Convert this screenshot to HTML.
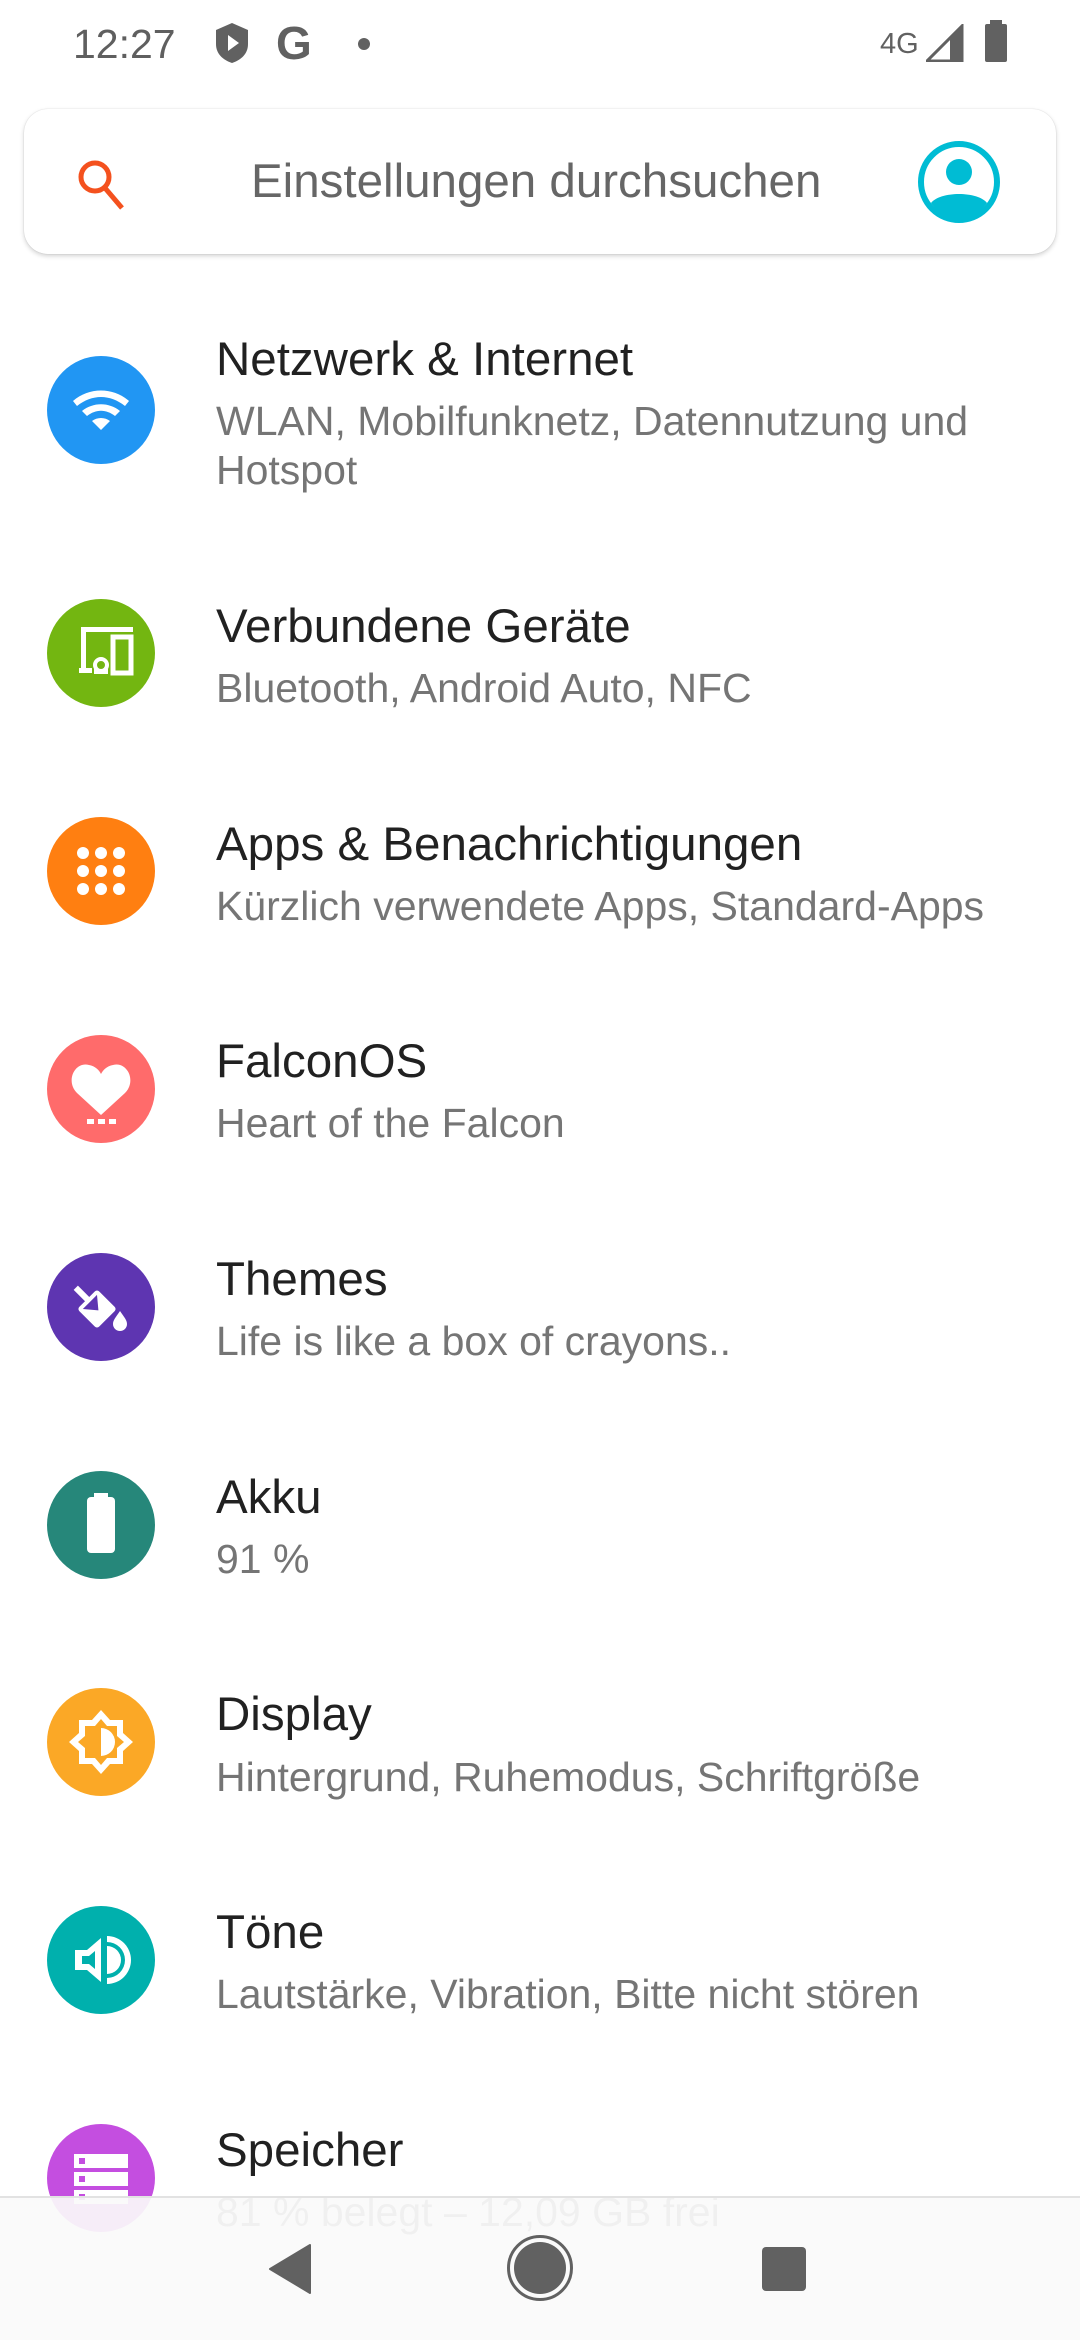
<!DOCTYPE html>
<html><head><meta charset="utf-8"><style>
*{margin:0;padding:0;box-sizing:border-box}
body{width:1080px;height:2340px;background:#fff;position:relative;overflow:hidden;font-family:"Liberation Sans",Roboto,sans-serif}
.a{position:absolute;white-space:nowrap}
.t{left:216px;font-size:47.5px;color:#212121;height:60px;line-height:60px}
.s{left:216px;font-size:41px;color:#757575;height:50px;line-height:50px}
.ic{position:absolute;left:47px;width:108px;height:108px}
</style></head><body>
<!-- status bar -->
<div class="a" style="left:73px;top:21px;font-size:41px;color:#5f5f5f;line-height:46px">12:27</div>
<svg class="a" style="left:214px;top:22px" width="36" height="42" viewBox="0 0 36 42"><path d="M18 1 L34 8 V22 C34 32 27 38 18 41 C9 38 2 32 2 22 V8 Z" fill="#616161"/><path d="M14 13 L25 21 L14 29 Z" fill="#fff"/></svg>
<div class="a" style="left:276px;top:18px;font-size:46px;font-weight:bold;color:#616161;line-height:50px">G</div>
<div class="a" style="left:358px;top:38px;width:12px;height:12px;border-radius:50%;background:#616161"></div>
<div class="a" style="left:880px;top:26px;font-size:29px;color:#616161;line-height:36px">4G</div>
<svg class="a" style="left:926px;top:24px" width="38" height="38" viewBox="0 0 38 38"><path d="M36 2 V37 H1 Z" fill="none" stroke="#616161" stroke-width="3"/><path d="M36 2 V37 H24 V14 Z" fill="#616161"/></svg>
<div class="a" style="left:985px;top:24px;width:22px;height:38px;background:#616161;border-radius:2px"></div>
<div class="a" style="left:990px;top:20px;width:12px;height:6px;background:#616161"></div>
<!-- search -->
<div class="a" style="left:24px;top:109px;width:1032px;height:145px;border-radius:24px;background:#fff;box-shadow:0 2px 5px rgba(0,0,0,0.18),0 0 1px rgba(0,0,0,0.2)"></div>
<svg class="a" style="left:74px;top:156px" width="54" height="56" viewBox="0 0 54 56"><circle cx="21" cy="21" r="14" fill="none" stroke="#F4511E" stroke-width="5"/><path d="M31 32 L48 52" stroke="#F4511E" stroke-width="5"/></svg>
<div class="a" style="left:251px;top:154px;font-size:47.5px;color:#666;line-height:56px">Einstellungen durchsuchen</div>
<svg class="a" style="left:918px;top:141px" width="82" height="82" viewBox="0 0 82 82"><circle cx="41" cy="41" r="38" fill="none" stroke="#00BCD4" stroke-width="6"/><circle cx="41" cy="31" r="13" fill="#00BCD4"/><path d="M13 62 C22 50 60 50 69 62 C62 72 52 78 41 78 C30 78 20 72 13 62Z" fill="#00BCD4"/></svg>

<!-- rows -->
<svg class="ic" style="top:356px" viewBox="0 0 108 108"><circle cx="54" cy="54" r="54" fill="#2196F3"/><path d="M26 45 C42 31 66 31 82 45 L78 50 C63 38 45 38 30 50Z M35 55 C46 46 62 46 73 55 L68 60 C59 53 49 53 40 60Z M45 65 C50 61 58 61 63 65 L54 74Z" fill="#fff"/></svg>
<div class="a t" style="top:330px">Netzwerk &amp; Internet</div>
<div class="a s" style="top:396px">WLAN, Mobilfunknetz, Datennutzung und</div>
<div class="a s" style="top:445px">Hotspot</div>

<svg class="ic" style="top:599px" viewBox="0 0 108 108"><circle cx="54" cy="54" r="54" fill="#73B611"/><path d="M34 28 H86 V33 H39 V73 H34Z M32 69 H45 V74 H32Z" fill="#fff"/><rect x="66" y="38" width="18" height="36" fill="none" stroke="#fff" stroke-width="5"/><circle cx="54" cy="66" r="6" fill="none" stroke="#fff" stroke-width="4"/><rect x="47" y="70" width="14" height="5" fill="#fff"/></svg>
<div class="a t" style="top:597px">Verbundene Geräte</div>
<div class="a s" style="top:663px">Bluetooth, Android Auto, NFC</div>

<svg class="ic" style="top:817px" viewBox="0 0 108 108"><circle cx="54" cy="54" r="54" fill="#FF7F11"/><g fill="#fff"><circle cx="36" cy="36" r="6"/><circle cx="54" cy="36" r="6"/><circle cx="72" cy="36" r="6"/><circle cx="36" cy="54" r="6"/><circle cx="54" cy="54" r="6"/><circle cx="72" cy="54" r="6"/><circle cx="36" cy="72" r="6"/><circle cx="54" cy="72" r="6"/><circle cx="72" cy="72" r="6"/></g></svg>
<div class="a t" style="top:815px">Apps &amp; Benachrichtigungen</div>
<div class="a s" style="top:881px">Kürzlich verwendete Apps, Standard-Apps</div>

<svg class="ic" style="top:1035px" viewBox="0 0 108 108"><circle cx="54" cy="54" r="54" fill="#FF6B6B"/><path d="M54 80 L30 58 C18 46 28 26 42 30 C48 31 52 35 54 39 C56 35 60 31 66 30 C80 26 90 46 78 58Z" fill="#fff"/><g fill="#fff"><rect x="40" y="84" width="7" height="5"/><rect x="51" y="84" width="7" height="5"/><rect x="62" y="84" width="7" height="5"/></g></svg>
<div class="a t" style="top:1032px">FalconOS</div>
<div class="a s" style="top:1098px">Heart of the Falcon</div>

<svg class="ic" style="top:1253px" viewBox="0 0 108 108"><circle cx="54" cy="54" r="54" fill="#5E35B1"/><g transform="rotate(-45 50 56)"><rect x="36" y="42" width="28" height="28" rx="3" fill="#fff"/><path d="M40 46 H60 L50 58Z" fill="#5E35B1"/><rect x="47" y="26" width="6" height="18" fill="#fff"/></g><path d="M73 58 C69 64 66 67 66 71 A7 7 0 0 0 80 71 C80 67 77 64 73 58Z" fill="#fff"/></svg>
<div class="a t" style="top:1250px">Themes</div>
<div class="a s" style="top:1316px">Life is like a box of crayons..</div>

<svg class="ic" style="top:1471px" viewBox="0 0 108 108"><circle cx="54" cy="54" r="54" fill="#26877A"/><rect x="47" y="22" width="14" height="6" fill="#fff"/><rect x="40" y="26" width="28" height="56" rx="4" fill="#fff"/></svg>
<div class="a t" style="top:1468px">Akku</div>
<div class="a s" style="top:1534px">91 %</div>

<svg class="ic" style="top:1688px" viewBox="0 0 108 108"><circle cx="54" cy="54" r="54" fill="#FBA826"/><path d="M54 22 L63 32 H76 V45 L86 54 L76 63 V76 H63 L54 86 L45 76 H32 V63 L22 54 L32 45 V32 H45 Z" fill="#fff"/><path d="M54 31 L60 38 H70 V48 L77 54 L70 60 V70 H60 L54 77 L48 70 H38 V60 L31 54 L38 48 V38 H48 Z" fill="#FBA826"/><path d="M54 40 A14 14 0 0 1 54 68Z" fill="#fff"/></svg>
<div class="a t" style="top:1685px">Display</div>
<div class="a s" style="top:1752px">Hintergrund, Ruhemodus, Schriftgröße</div>

<svg class="ic" style="top:1906px" viewBox="0 0 108 108"><circle cx="54" cy="54" r="54" fill="#00B0AD"/><path d="M28 44 H40 L54 32 V76 L40 64 H28Z" fill="#fff"/><path d="M35 50 H42 L48 45 V63 L42 58 H35Z" fill="#00B0AD"/><path d="M60 40 A14 14 0 0 1 60 68Z" fill="#fff"/><path d="M60 30 A24 24 0 0 1 60 78 V72 A18 18 0 0 0 60 36Z" fill="#fff"/></svg>
<div class="a t" style="top:1903px">Töne</div>
<div class="a s" style="top:1969px">Lautstärke, Vibration, Bitte nicht stören</div>

<svg class="ic" style="top:2124px" viewBox="0 0 108 108"><circle cx="54" cy="54" r="54" fill="#C44EE0"/><g fill="#fff"><rect x="27" y="30" width="54" height="14"/><rect x="27" y="48" width="54" height="14"/><rect x="27" y="66" width="54" height="14"/></g><g fill="#C44EE0"><rect x="32" y="34" width="6" height="6"/><rect x="32" y="52" width="6" height="6"/><rect x="32" y="70" width="6" height="6"/></g></svg>
<div class="a t" style="top:2121px">Speicher</div>
<div class="a s" style="top:2187px">81 % belegt – 12,09 GB frei</div>

<!-- nav bar -->
<div class="a" style="left:0;top:2196px;width:1080px;height:144px;background:rgba(250,250,250,0.93);border-top:2px solid #e2e2e2"></div>
<svg class="a" style="left:268px;top:2243px" width="44" height="52" viewBox="0 0 44 52"><path d="M42 2 V50 L2 26Z" fill="#616161" stroke="#616161" stroke-width="2" stroke-linejoin="round"/></svg>
<div class="a" style="left:507px;top:2235px;width:66px;height:66px;border-radius:50%;border:3px solid #616161"></div>
<div class="a" style="left:514px;top:2242px;width:52px;height:52px;border-radius:50%;background:#616161"></div>
<div class="a" style="left:762px;top:2247px;width:44px;height:44px;border-radius:4px;background:#616161"></div>
</body></html>
